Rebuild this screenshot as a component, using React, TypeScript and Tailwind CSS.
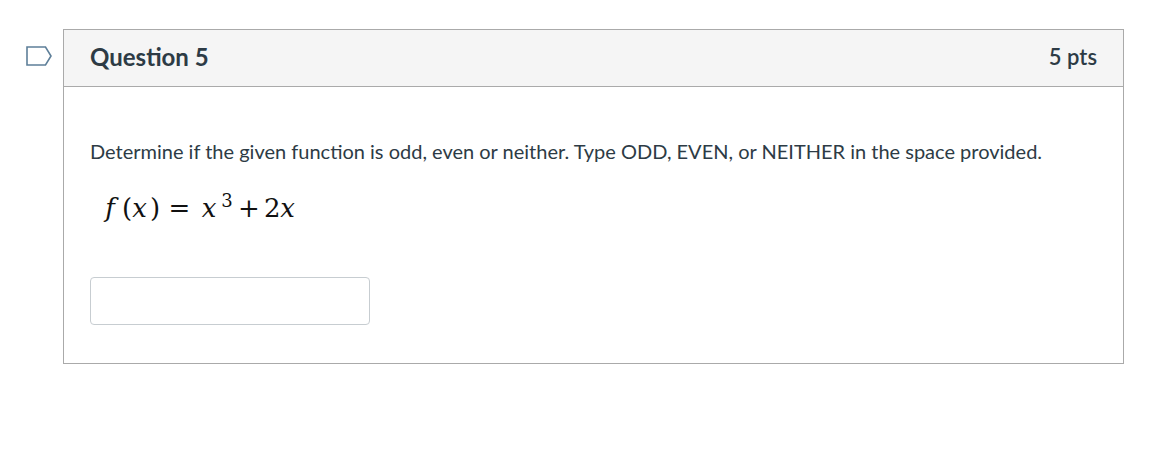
const FlagIcon = () => (
  <svg width="27" height="20" viewBox="0 0 27 20" fill="none" aria-hidden="true">
    <path
      d="M1 1H19.5L25 10L19.5 19H1Z"
      stroke="#5e7f99"
      strokeWidth="1.6"
      strokeLinejoin="miter"
    />
  </svg>
);

// glyph boxes sized so each symbol sits where the typeset formula puts it
const MathLine = () => (
  <div
    className="pl-[8px] h-[30px] text-[26px] leading-[30px] text-[#111] whitespace-nowrap"
    style={{ fontFamily: '"DejaVu Serif", "Liberation Serif", serif' }}
  >
    <span className="inline-block w-[24px] text-center italic">f</span>
    <span className="inline-block w-[8px] text-center">(</span>
    <span className="inline-block w-[19px] text-center italic">x</span>
    <span className="inline-block w-[12px] text-center">)</span>
    <span className="inline-block w-[37px] text-center">=</span>
    <span className="inline-block w-[22px] text-center italic">x</span>
    <span className="inline-block w-[14px] text-center">
      <span className="relative top-[-10px] text-[18px]">3</span>
    </span>
    <span className="inline-block w-[30px] text-center">+</span>
    <span className="inline-block w-[11px] text-center">2</span>
    <span className="inline-block w-[25px] text-center italic">x</span>
  </div>
);

export default function App() {
  return (
    <div
      className="w-[1168px] h-[464px] bg-white flex items-start pt-[29px]"
      style={{ fontFamily: 'Lato, "Open Sans", sans-serif' }}
    >
      <div className="w-[63px] pl-[26px] pt-[17px]">
        <FlagIcon />
      </div>
      <div className="w-[1061px] border border-[#aaaaaa]">
        <div className="h-[57px] bg-[#f5f5f5] border-b border-[#aaaaaa] px-[26px] flex items-center justify-between text-[#2d3b45]">
          <h2 className="text-[24px] font-bold leading-none mt-[-2px]">Question 5</h2>
          <span className="text-[22px] font-semibold leading-none mt-[-2px]">5 pts</span>
        </div>
        <div className="pt-[49px] pb-[38px] px-[26px] text-[#2d3b45]">
          <p className="text-[20px] leading-[30px]">
            Determine if the given function is odd, even or neither. Type ODD, EVEN, or NEITHER in the space provided.
          </p>
          <div className="mt-[27px]">
            <MathLine />
          </div>
          <input
            type="text"
            className="mt-[54px] block w-[280px] h-[48px] border border-[#c7cdd1] rounded-[4px] bg-white"
          />
        </div>
      </div>
    </div>
  );
}
